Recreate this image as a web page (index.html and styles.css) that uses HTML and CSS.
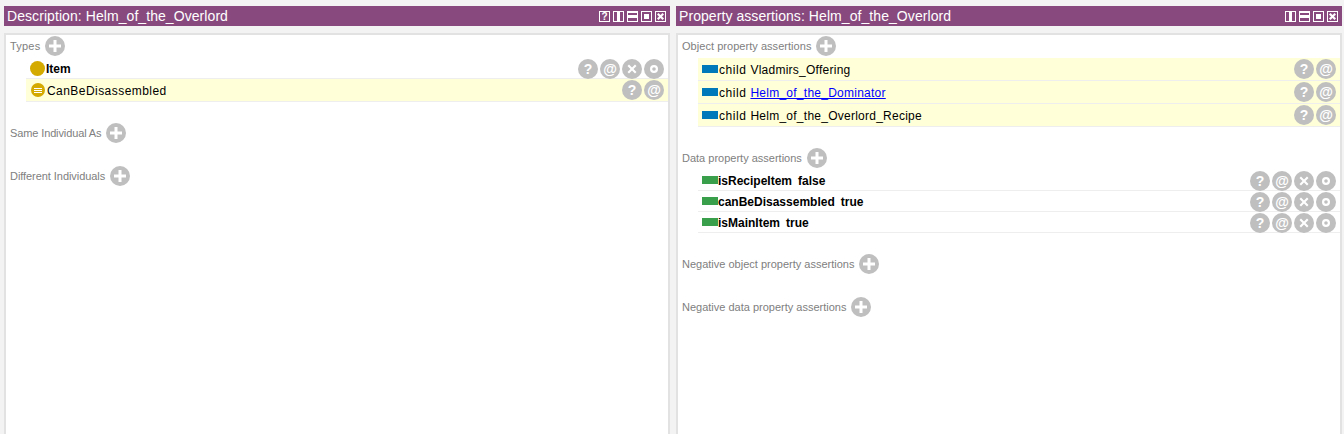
FILE: index.html
```html
<!DOCTYPE HTML>
<html>

<head>
    <meta charset="utf-8">
    <title>Helm_of_the_Overlord</title>
    <link rel="stylesheet" href="styles.css">
</head>

<body>
    <svg class="sprite" width="0" height="0">
        <symbol id="plus" viewBox="0 0 20 20"><path d="M8.500 4h3v4.500h4.500v3h-4.500v4.500h-3v-4.500h-4.500v-3h4.500z" /></symbol>
        <symbol id="cross" viewBox="0 0 20 20"><path d="M7 5.500l3 3 3-3 1.500 1.500-3 3 3 3-1.500 1.500-3-3-3 3-1.500-1.500 3-3-3-3z" /></symbol>
        <symbol id="ring" viewBox="0 0 20 20"><path fill-rule="evenodd" d="M10 6a4 4 0 1 0 0 8a4 4 0 1 0 0-8zM10 8.200a1.800 1.800 0 1 1 0 3.600a1.800 1.800 0 1 1 0-3.600z" /></symbol>
        <symbol id="hsplit" viewBox="0 0 11 11"><path fill-rule="evenodd" d="M0 0h11v11h-11zM1 1v9h3v-9zM7 1v9h3v-9z" /></symbol>
        <symbol id="vsplit" viewBox="0 0 11 11"><path fill-rule="evenodd" d="M0 0h11v11h-11zM1 2v2h9v-2zM1 7v3h9v-3z" /></symbol>
        <symbol id="maxi" viewBox="0 0 11 11"><path fill-rule="evenodd" d="M0 0h11v11h-11zM1 1v9h9v-9zM3 3h5v5h-5z" /></symbol>
        <symbol id="close" viewBox="0 0 11 11"><path fill-rule="evenodd" d="M0 0h11v11h-11zM1 1v9h9v-9zM3.500 2l2 2 2-2 1.500 1.500-2 2 2 2-1.500 1.500-2-2-2 2-1.500-1.500 2-2-2-2z" /></symbol>
    </svg>

    <div class="views">
        <div class="view">
            <div class="view-head">
                <span class="view-title">Description: Helm_of_the_Overlord</span>
                <span class="view-icons">
                    <span class="help-box">?</span>
                    <svg class="view-icon"><use href="#hsplit" /></svg>
                    <svg class="view-icon"><use href="#vsplit" /></svg>
                    <svg class="view-icon"><use href="#maxi" /></svg>
                    <svg class="view-icon"><use href="#close" /></svg>
                </span>
            </div>
            <div class="panel">
                <div class="section">
                    <div class="sec-head sec-types">Types <svg class="add"><use href="#plus" /></svg></div>
                    <div class="row row-bold">
                        <span class="dot"></span>
                        <span class="row-text item-name">Item</span>
                        <span class="btns">
                            <span class="btn">?</span><span class="btn">@</span>
                            <span class="btn"><svg><use href="#cross" /></svg></span>
                            <span class="btn"><svg><use href="#ring" /></svg></span>
                        </span>
                    </div>
                    <div class="row row-inferred">
                        <span class="dot dot-equiv"><i></i></span>
                        <span class="row-text class-name">CanBeDisassembled</span>
                        <span class="btns"><span class="btn">?</span><span class="btn">@</span></span>
                    </div>
                </div>
                <div class="section section-empty">
                    <div class="sec-head sec-same">Same Individual As <svg class="add"><use href="#plus" /></svg></div>
                </div>
                <div class="section section-empty">
                    <div class="sec-head sec-diff">Different Individuals <svg class="add"><use href="#plus" /></svg></div>
                </div>
            </div>
        </div>

        <div class="view">
            <div class="view-head">
                <span class="view-title">Property assertions: Helm_of_the_Overlord</span>
                <span class="view-icons">
                    <svg class="view-icon"><use href="#hsplit" /></svg>
                    <svg class="view-icon"><use href="#vsplit" /></svg>
                    <svg class="view-icon"><use href="#maxi" /></svg>
                    <svg class="view-icon"><use href="#close" /></svg>
                </span>
            </div>
            <div class="panel">
                <div class="section">
                    <div class="sec-head sec-object">Object property assertions <svg class="add"><use href="#plus" /></svg></div>
                    <div class="row row-inferred">
                        <span class="bar bar-obj"></span>
                        <span class="row-text obj-text"><span class="prop">child</span><span>Vladmirs_Offering</span></span>
                        <span class="btns"><span class="btn">?</span><span class="btn">@</span></span>
                    </div>
                    <div class="row row-inferred">
                        <span class="bar bar-obj"></span>
                        <span class="row-text obj-text"><span class="prop">child</span><a href="#">Helm_of_the_Dominator</a></span>
                        <span class="btns"><span class="btn">?</span><span class="btn">@</span></span>
                    </div>
                    <div class="row row-inferred">
                        <span class="bar bar-obj"></span>
                        <span class="row-text obj-text"><span class="prop">child</span><span>Helm_of_the_Overlord_Recipe</span></span>
                        <span class="btns"><span class="btn">?</span><span class="btn">@</span></span>
                    </div>
                </div>
                <div class="section">
                    <div class="sec-head">Data property assertions <svg class="add"><use href="#plus" /></svg></div>
                    <div class="row row-bold">
                        <span class="bar bar-data"></span>
                        <span class="row-text data-text"><span>isRecipeItem</span><span>false</span></span>
                        <span class="btns">
                            <span class="btn">?</span><span class="btn">@</span>
                            <span class="btn"><svg><use href="#cross" /></svg></span>
                            <span class="btn"><svg><use href="#ring" /></svg></span>
                        </span>
                    </div>
                    <div class="row row-bold">
                        <span class="bar bar-data"></span>
                        <span class="row-text data-text"><span>canBeDisassembled</span><span>true</span></span>
                        <span class="btns">
                            <span class="btn">?</span><span class="btn">@</span>
                            <span class="btn"><svg><use href="#cross" /></svg></span>
                            <span class="btn"><svg><use href="#ring" /></svg></span>
                        </span>
                    </div>
                    <div class="row row-bold">
                        <span class="bar bar-data"></span>
                        <span class="row-text data-text"><span>isMainItem</span><span>true</span></span>
                        <span class="btns">
                            <span class="btn">?</span><span class="btn">@</span>
                            <span class="btn"><svg><use href="#cross" /></svg></span>
                            <span class="btn"><svg><use href="#ring" /></svg></span>
                        </span>
                    </div>
                </div>
                <div class="section section-empty">
                    <div class="sec-head">Negative object property assertions <svg class="add"><use href="#plus" /></svg></div>
                </div>
                <div class="section section-empty">
                    <div class="sec-head">Negative data property assertions <svg class="add"><use href="#plus" /></svg></div>
                </div>
            </div>
        </div>
    </div>
</body>

</html>
```

FILE: styles.css
```css
* {
    margin: 0;
    padding: 0;
    box-sizing: border-box;
}

html, body {
    height: 100%;
    overflow: hidden;
}

body {
    background: #f3f3f3;
    font-family: "Liberation Sans", Arial, sans-serif;
    color: #000;
}

.sprite {
    position: absolute;
}

.views {
    display: grid;
    grid-template-columns: 666px 666px;
    gap: 6px;
    height: 434px;
    padding: 6px 0 0 4px;
}

.view {
    display: flex;
    flex-direction: column;
    min-height: 0;
}

.view-head {
    display: flex;
    align-items: center;
    justify-content: space-between;
    height: 20px;
    padding: 0 4px 0 3px;
    background: #884a7e;
    color: #fff;
}

.view-title {
    font-size: 14px;
    letter-spacing: .07px;
}

.view-icons {
    display: flex;
    gap: 3px;
    margin-top: 1px;
}

.view-icon {
    width: 11px;
    height: 11px;
    fill: #fff;
}

.help-box {
    width: 11px;
    height: 11px;
    border: 1px solid #fff;
    font-size: 10px;
    font-weight: bold;
    line-height: 9px;
    text-align: center;
}

.panel {
    flex: 1;
    margin-top: 7px;
    background: #fff;
    border: 2px solid #e2e2e2;
    border-bottom: 0;
}

.section {
    margin-bottom: 20px;
}

.section-empty {
    margin-bottom: 21px;
}

.sec-head {
    display: flex;
    align-items: center;
    gap: 5px;
    height: 22px;
    margin-bottom: 1px;
    padding-left: 4px;
    font-size: 11px;
    color: #808080;
}

/* label widths differ a little from the original font */
.sec-types {
    letter-spacing: .2px;
}

.sec-same {
    letter-spacing: -.12px;
}

.sec-diff {
    letter-spacing: -.06px;
}

.sec-object {
    letter-spacing: .04px;
}

.add {
    width: 20px;
    height: 20px;
    border-radius: 50%;
    background: #bfbfbf;
    fill: #fff;
}

.row {
    display: flex;
    align-items: center;
    height: 23px;
    margin-left: 20px;
    padding: 0 4px;
    border-bottom: 1px solid #eee;
    font-size: 12px;
}

.row-bold {
    height: 21px;
    font-weight: bold;
}

.row-inferred {
    background: #ffffd8;
}

.row-text {
    display: flex;
    gap: 6px;
    margin-top: 2px;
}

.item-name {
    margin-left: 1px;
}

.class-name {
    margin-left: 2px;
    letter-spacing: .45px;
}

.obj-text {
    gap: 4px;
    margin-left: 1px;
    letter-spacing: .25px;
}

.obj-text .prop {
    letter-spacing: .55px;
}

.row-text a {
    color: #00f;
}

.dot {
    display: flex;
    align-items: center;
    justify-content: center;
    width: 15px;
    height: 15px;
    border-radius: 50%;
    background: #d4a900;
}

.dot-equiv {
    width: 14px;
    height: 14px;
    margin-left: 1px;
}

.dot-equiv i {
    width: 8px;
    height: 5px;
    border-top: 1px solid #fff;
    border-bottom: 1px solid #fff;
    background: linear-gradient(#fff, #fff) center / 100% 1px no-repeat;
}

.bar {
    width: 16px;
    height: 8px;
}

.bar-obj {
    background: #0079ba;
}

.bar-data {
    background: #3a9f4a;
}

.btns {
    display: flex;
    gap: 2px;
    margin-left: auto;
}

.row-bold .btns {
    margin-top: 2px;
}

.btn {
    display: flex;
    align-items: center;
    justify-content: center;
    width: 20px;
    height: 20px;
    border-radius: 50%;
    background: #bfbfbf;
    color: #fff;
    fill: #fff;
    font-size: 14px;
    font-weight: bold;
}

.btn svg {
    width: 20px;
    height: 20px;
}
```
